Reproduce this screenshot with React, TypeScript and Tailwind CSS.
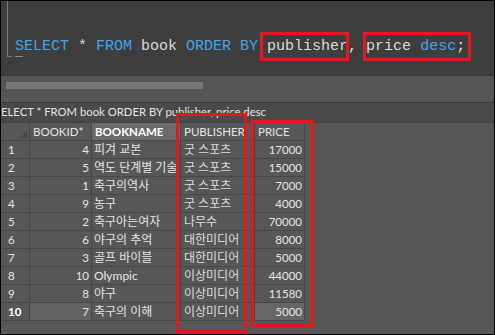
import React from "react";

const rows = [
  { n: 1, id: 4, name: "피겨 교본", pub: "굿 스포츠", price: 17000 },
  { n: 2, id: 5, name: "역도 단계별 기술", pub: "굿 스포츠", price: 15000 },
  { n: 3, id: 1, name: "축구의역사", pub: "굿 스포츠", price: 7000 },
  { n: 4, id: 9, name: "농구", pub: "굿 스포츠", price: 4000 },
  { n: 5, id: 2, name: "축구아는여자", pub: "나무수", price: 70000 },
  { n: 6, id: 6, name: "야구의 추억", pub: "대한미디어", price: 8000 },
  { n: 7, id: 3, name: "골프 바이블", pub: "대한미디어", price: 5000 },
  { n: 8, id: 10, name: "Olympic", pub: "이상미디어", price: 44000 },
  { n: 9, id: 8, name: "야구", pub: "이상미디어", price: 11580 },
  { n: 10, id: 7, name: "축구의 이해", pub: "이상미디어", price: 5000 },
];

const cell = "h-[18px] flex items-center border-r border-b border-[#474747] overflow-hidden whitespace-nowrap shrink-0";

export default function App() {
  const kw = "text-[#46a2e4]";
  return (
    <div
      className="relative w-[495px] h-[335px] bg-black p-px overflow-hidden"
      style={{ fontFamily: 'Lato, "Noto Sans CJK KR", sans-serif' }}
    >
      <div className="flex flex-col h-full bg-[#575757]">
        {/* editor */}
        <div className="relative h-[75px] bg-[#3e3e3e] shrink-0 border-b border-[#353535]">
          <div className="absolute left-[6px] top-0 w-px h-[56px] bg-[#7a7a7a]" />
          <div className="absolute left-[6px] top-[55px] w-[5px] h-px bg-[#7a7a7a]" />
          <div className="absolute left-[14px] top-[55px] w-[8px] h-px bg-[#8a8a8a]" />
          <div
            className="pl-[14px] pt-[37px] text-[15px] leading-[18px] text-[#dadada] whitespace-pre"
            style={{ fontFamily: '"Liberation Mono", monospace' }}
          >
            <span className={kw}>SELECT</span> * <span className={kw}>FROM</span> book{" "}
            <span className={kw}>ORDER BY</span> publisher, price <span className={kw}>desc</span>;
          </div>
        </div>
        {/* scroll area */}
        <div className="h-[27px] bg-[#555555] shrink-0 border-b border-[#3a3a3a] pt-[6px] pl-[5px]">
          <div className="w-[197px] h-[7px] bg-[#777777]" />
        </div>
        {/* result title */}
        <div className="h-[20px] bg-[#4a4a4a] shrink-0 flex items-center text-[11.3px] text-[#e2e2e2] whitespace-nowrap border-b border-[#434343]">
          ELECT * FROM book ORDER BY publisher, price desc
        </div>
        {/* grid */}
        <div className="flex-1 bg-[#575757] text-[11.5px] text-[#e4e4e4]">
          <div className="flex">
            <div className={`${cell} w-[29px] bg-[#585858] justify-end pr-[2px] pt-[6px]`}>
              <div className="w-0 h-0 border-l-[7px] border-l-transparent border-b-[7px] border-b-[#474747]" />
            </div>
            <div className={`${cell} w-[62px] bg-[#585858] pl-[3px]`}>BOOKID*</div>
            <div className={`${cell} w-[89px] bg-[#6b6b6b] pl-[3px] font-bold text-white`}>BOOKNAME</div>
            <div className={`${cell} w-[74px] bg-[#585858] pl-[3px]`}>PUBLISHER</div>
            <div className={`${cell} w-[50px] bg-[#585858] pl-[3px]`}>PRICE</div>
          </div>
          {rows.map((r) => {
            const sel = r.n === 10;
            return (
              <div key={r.n} className="flex">
                <div className={`${cell} w-[29px] pl-[7px] ${sel ? "font-bold text-white" : ""}`}>{r.n}</div>
                <div className={`${cell} w-[62px] justify-end pr-[2px] ${sel ? "bg-[#626262]" : ""}`}>{r.id}</div>
                <div className={`${cell} w-[89px] pl-[2px] text-[12px]`}>{r.name}</div>
                <div className={`${cell} w-[74px] pl-[3px] text-[12px] text-[#dcdcdc]`}>{r.pub}</div>
                <div className={`${cell} w-[50px] justify-end pr-[2px] ${sel ? "bg-[#666666]" : ""}`}>{r.price}</div>
              </div>
            );
          })}
        </div>
      </div>

      {/* red highlight boxes */}
      <div className="absolute left-[260px] top-[32px] w-[89px] h-[29px] border-[3px] border-[#e3171e]" />
      <div className="absolute left-[363px] top-[32px] w-[108px] h-[29px] border-[3px] border-[#e3171e]" />
      <div className="absolute left-[176px] top-[113px] w-[71px] h-[220px] border-[3px] border-[#e3171e]" />
      <div className="absolute left-[251px] top-[120px] w-[63px] h-[207px] border-[3px] border-[#e3171e]" />
    </div>
  );
}
